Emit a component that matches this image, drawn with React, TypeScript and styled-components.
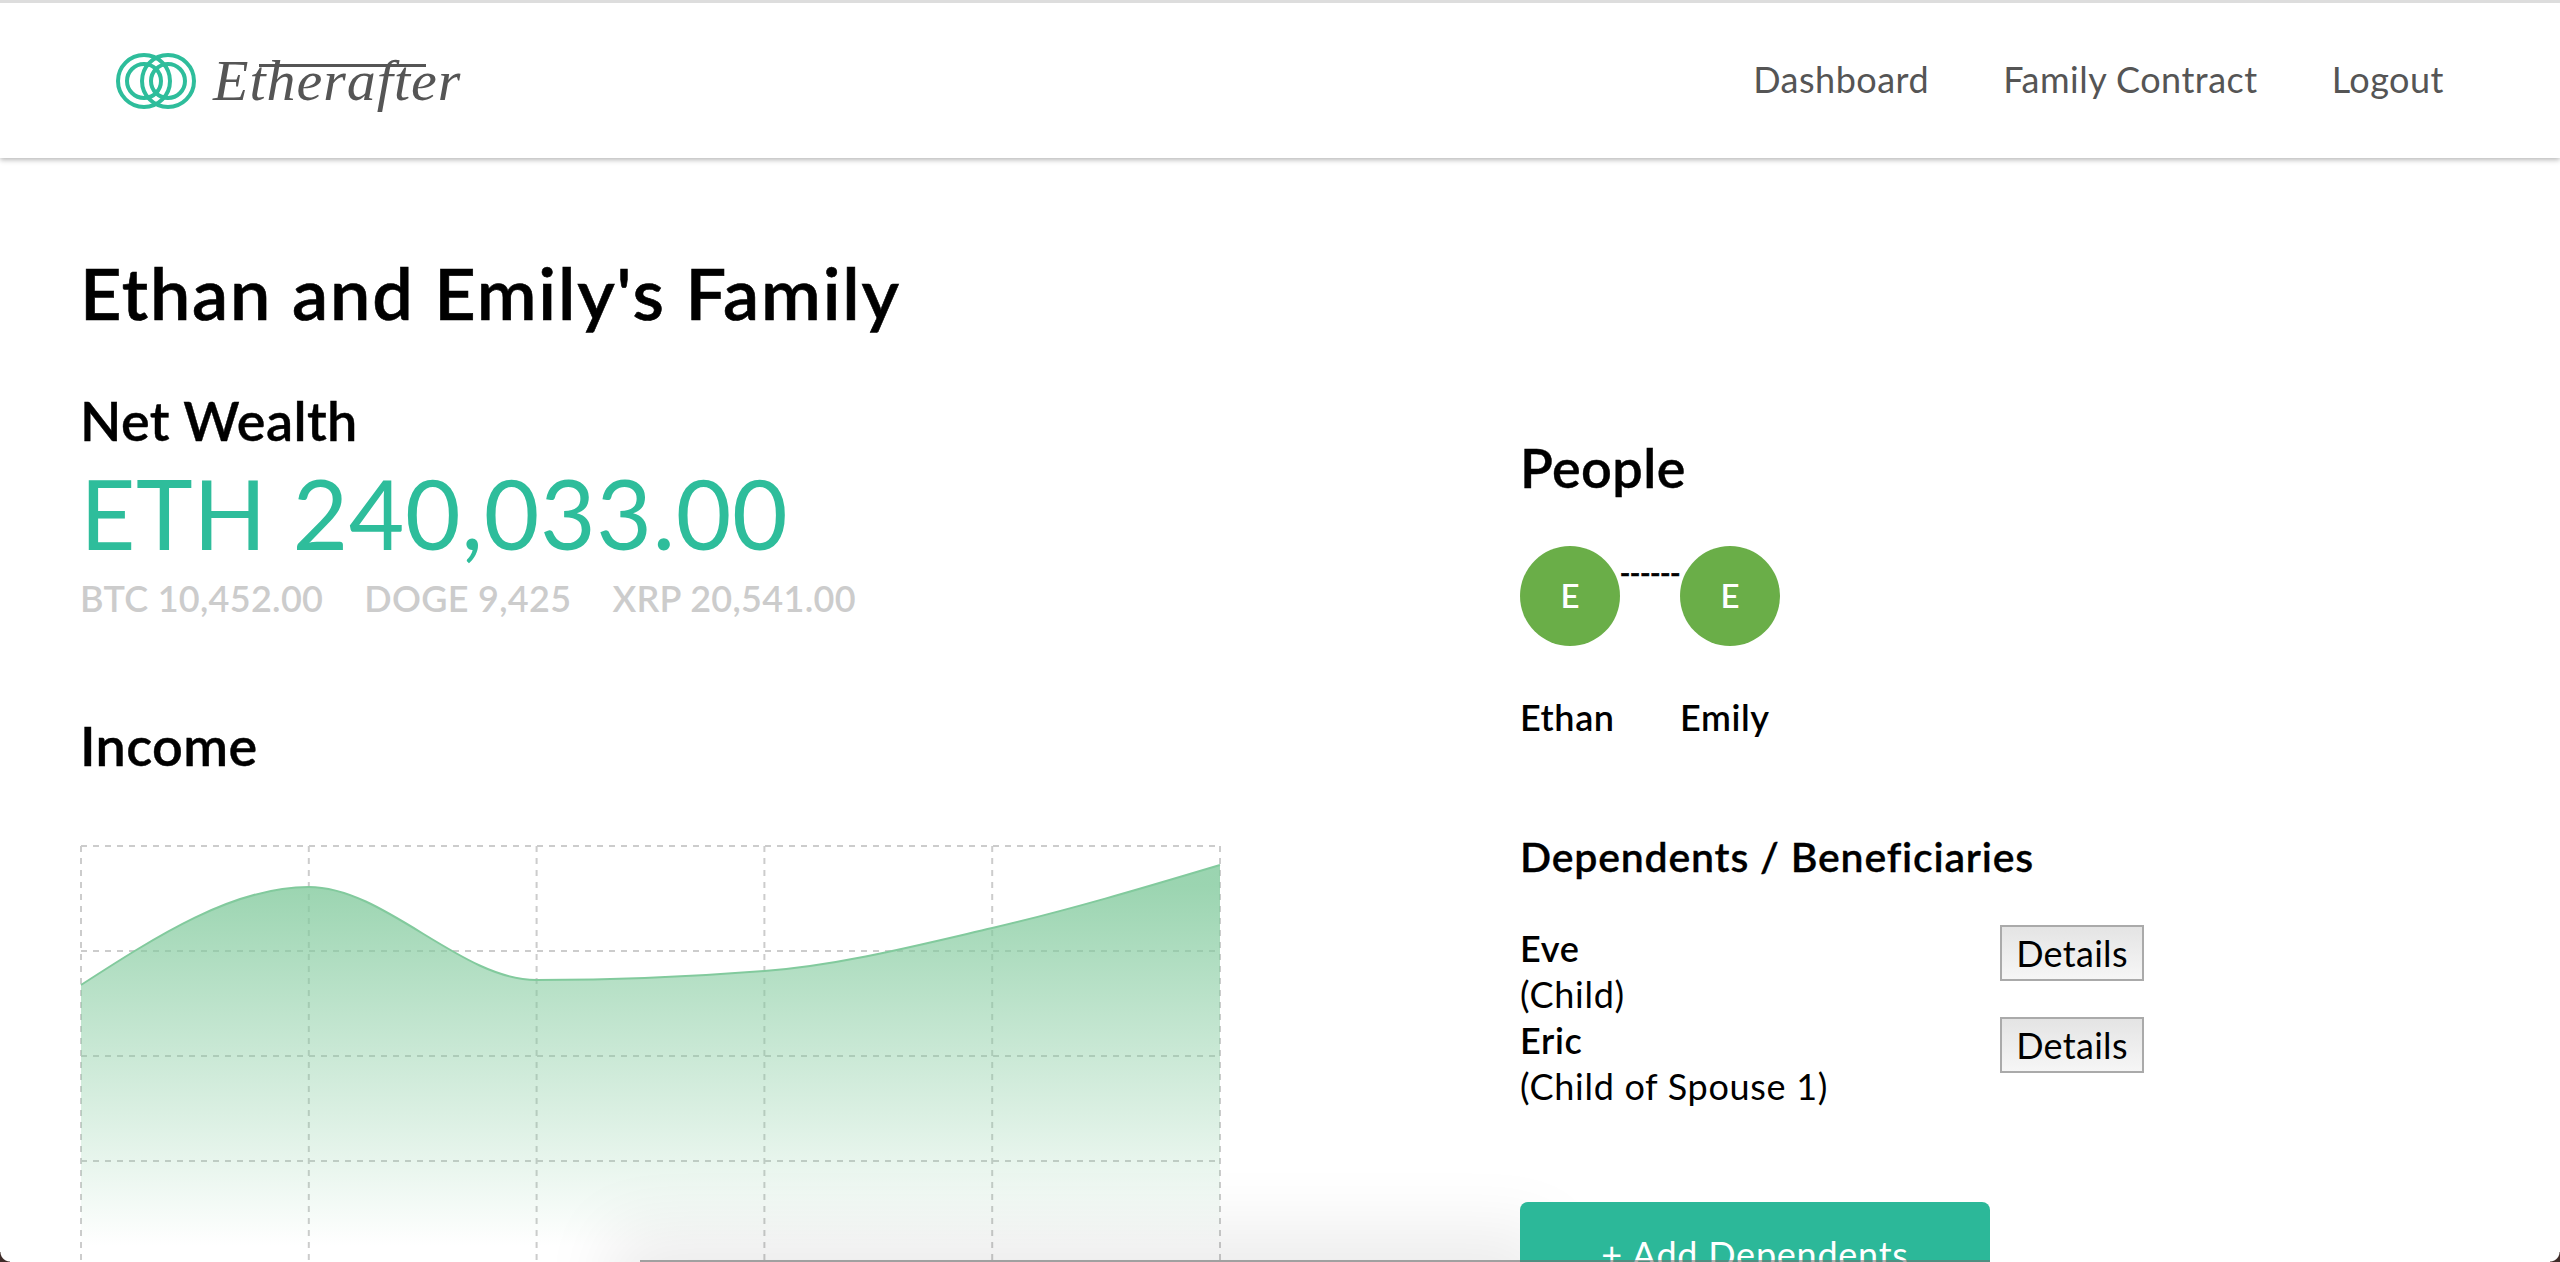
import React from "react";
import styled, { createGlobalStyle } from "styled-components";

const GlobalStyle = createGlobalStyle`
  html, body { margin: 0; padding: 0; height: 100%; overflow: hidden; background: #fff; }
  body { font-family: Lato, "Noto Sans", sans-serif; color: #000; }
  * { box-sizing: border-box; }
`;

const Page = styled.div`
  position: relative;
  height: 1262px;
  overflow: hidden;
`;

const Header = styled.header`
  position: relative;
  z-index: 2;
  height: 158px;
  border-top: 3px solid #ddd;
  padding: 0 116px;
  display: flex;
  align-items: center;
  justify-content: space-between;
  background: #fff;
  box-shadow: 0 2px 5px rgba(0, 0, 0, 0.28);
`;

const Brand = styled.a`
  display: flex;
  align-items: center;
  gap: 17px;
`;

const Wordmark = styled.span`
  position: relative;
  font-family: "Liberation Serif", serif;
  font-style: italic;
  font-size: 58px;
  line-height: 86px;
  color: #555;
  letter-spacing: 1px;
  &::after {
    content: "";
    position: absolute;
    left: 46px;
    top: 26px;
    width: 167px;
    height: 3px;
    background: #555;
  }
`;

const Nav = styled.nav`
  display: flex;
  gap: 74px;
  margin-top: -4px;
`;

const NavLink = styled.a`
  font-size: 36px;
  line-height: 44px;
  color: #555;
  letter-spacing: 0.5px;
`;

const Main = styled.main`
  display: grid;
  grid-template-columns: 1440px 1fr;
  padding-left: 80px;
`;

const LeftColumn = styled.section`
  padding-top: 94px;
`;

const RightColumn = styled.section`
  padding-top: 280px;
`;

const Title = styled.h1`
  margin: 0;
  font-size: 72px;
  line-height: 80px;
  font-weight: 600;
  letter-spacing: 1.8px;
  -webkit-text-stroke: 0.6px #000;
`;

const SectionTitle = styled.h2<{ $mt?: number }>`
  margin: ${(p) => p.$mt ?? 0}px 0 0;
  font-size: 54px;
  line-height: 60px;
  font-weight: 600;
  letter-spacing: 0.4px;
  -webkit-text-stroke: 0.4px #000;
`;

const Wealth = styled.div`
  margin-top: 8px;
  font-size: 96px;
  line-height: 108px;
  font-weight: 400;
  color: #2ebd9b;
  letter-spacing: 0.6px;
`;

const Holdings = styled.div`
  display: flex;
  gap: 41px;
  margin-top: 9px;
  font-size: 36px;
  line-height: 44px;
  font-weight: 600;
  letter-spacing: 0.3px;
  color: #ccc;
`;

const ChartBox = styled.div`
  margin-top: 69px;
  line-height: 0;
`;

const People = styled.div`
  display: flex;
  margin-top: 48px;
`;

const Person = styled.div`
  width: 100px;
`;

const Avatar = styled.div`
  width: 100px;
  height: 100px;
  padding-bottom: 2px;
  border-radius: 50%;
  background: #6aae48;
  color: #fff;
  font-size: 33px;
  font-weight: 600;
  display: flex;
  align-items: center;
  justify-content: center;
`;

const Name = styled.div`
  margin-top: 48px;
  font-size: 36px;
  line-height: 46px;
  font-weight: 600;
  letter-spacing: 0.6px;
  white-space: nowrap;
`;

const Dashes = styled.div`
  width: 60px;
  height: 40px;
  padding-top: 9px;
  font-size: 27px;
  line-height: 36px;
  font-weight: 700;
  text-align: center;
  white-space: nowrap;
  -webkit-text-stroke: 0.7px #000;
`;

const SubTitle = styled.h3`
  margin: 93px 0 0;
  font-size: 41px;
  line-height: 48px;
  font-weight: 600;
  letter-spacing: 0.8px;
  -webkit-text-stroke: 0.3px #000;
`;

const DependentList = styled.div`
  margin-top: 44px;
`;

const Dependent = styled.div`
  display: grid;
  grid-template-columns: 480px 144px;
`;

const DepText = styled.div`
  font-size: 36px;
  line-height: 46px;
  letter-spacing: 0.7px;
`;

const DepName = styled.div`
  font-weight: 600;
`;

const DetailsButton = styled.button`
  width: 144px;
  height: 56px;
  padding: 0;
  border: 2px solid #aaa;
  background: linear-gradient(#e4e4e4, #f6f6f6);
  font-family: inherit;
  font-size: 36px;
  letter-spacing: 0.3px;
  color: #000;
`;

const AddButton = styled.button`
  display: block;
  width: 470px;
  height: 100px;
  margin-top: 93px;
  padding: 4px 0 0;
  border: 0;
  border-radius: 8px;
  background: #2cb899;
  color: #fff;
  font-family: inherit;
  font-size: 36px;
  line-height: 44px;
  letter-spacing: 0.75px;
  position: relative;
  z-index: 1;
`;

const EdgeShadow = styled.div`
  position: absolute;
  left: 640px;
  top: 1260px;
  width: 880px;
  height: 60px;
  background: #ddd;
  box-shadow: 0 0 70px 30px rgba(0, 0, 0, 0.08);
  pointer-events: none;
`;

const EdgeLine = styled.div`
  position: absolute;
  z-index: 3;
  left: 640px;
  top: 1260px;
  width: 1350px;
  height: 2px;
  background: rgba(110, 110, 110, 0.55);
`;

const Corner = styled.span<{ $side: "left" | "right" }>`
  position: absolute;
  z-index: 4;
  bottom: 0;
  ${(p) => p.$side}: 0;
  width: 10px;
  height: 10px;
  background: radial-gradient(
    circle at ${(p) => (p.$side === "left" ? "100% 0" : "0 0")},
    transparent 9px,
    #3e2b28 10px
  );
`;

function RingsLogo() {
  return (
    <svg width="80" height="56" viewBox="0 0 80 56" fill="none" stroke="#2ebd9b" strokeWidth="4">
      <circle cx="28" cy="28" r="26" />
      <circle cx="28" cy="28" r="17" />
      <circle cx="52" cy="28" r="26" />
      <circle cx="52" cy="28" r="17" />
    </svg>
  );
}

const series = [139, 41, 134, 125, 82, 19];
const STEP = 227.8;

function monotonePath(ys: number[], step: number) {
  const slopes = ys.slice(1).map((y, i) => (y - ys[i]) / step);
  const t = ys.map((_, i) => {
    if (i === 0 || i === ys.length - 1) return 0;
    const a = slopes[i - 1];
    const b = slopes[i];
    if (a * b <= 0) return 0;
    const p = (a + b) / 2;
    return (Math.sign(a) + Math.sign(b)) * Math.min(Math.abs(a), Math.abs(b), 0.5 * Math.abs(p));
  });
  t[0] = (3 * slopes[0] - t[1]) / 2;
  t[ys.length - 1] = (3 * slopes[slopes.length - 1] - t[ys.length - 2]) / 2;
  let d = `M0,${ys[0]}`;
  for (let i = 0; i < ys.length - 1; i++) {
    const x0 = i * step;
    const x1 = (i + 1) * step;
    const dx = step / 3;
    d += `C${x0 + dx},${ys[i] + dx * t[i]} ${x1 - dx},${ys[i + 1] - dx * t[i + 1]} ${x1},${ys[i + 1]}`;
  }
  return d;
}

function IncomeChart() {
  const line = monotonePath(series, STEP);
  const width = STEP * 5;
  return (
    <svg width="1142" height="424" viewBox="-1 -1 1142 424" fill="none">
      <defs>
        <linearGradient id="income" x1="0" y1="0" x2="0" y2="1">
          <stop offset="5%" stopColor="#82ca9d" stopOpacity="0.8" />
          <stop offset="95%" stopColor="#82ca9d" stopOpacity="0" />
        </linearGradient>
      </defs>
      <g stroke="#ccc" strokeWidth="2" strokeDasharray="6 6">
        {[0, 105, 210, 315].map((y) => (
          <line key={y} x1="0" x2={width} y1={y} y2={y} />
        ))}
        {[0, 1, 2, 3, 4, 5].map((i) => (
          <line key={i} x1={i * STEP} x2={i * STEP} y1="0" y2="424" />
        ))}
      </g>
      <path d={`${line}L${width},420L0,420Z`} fill="url(#income)" />
      <path d={line} stroke="#82ca9d" strokeWidth="2" />
    </svg>
  );
}

export default function App() {
  return (
    <Page>
      <GlobalStyle />
      <EdgeShadow />
      <Header>
        <Brand>
          <RingsLogo />
          <Wordmark>Etherafter</Wordmark>
        </Brand>
        <Nav>
          <NavLink>Dashboard</NavLink>
          <NavLink>Family Contract</NavLink>
          <NavLink>Logout</NavLink>
        </Nav>
      </Header>
      <Main>
        <LeftColumn>
          <Title>Ethan and Emily's Family</Title>
          <SectionTitle $mt={59}>Net Wealth</SectionTitle>
          <Wealth>ETH 240,033.00</Wealth>
          <Holdings>
            <span>BTC 10,452.00</span>
            <span>DOGE 9,425</span>
            <span>XRP 20,541.00</span>
          </Holdings>
          <SectionTitle $mt={96}>Income</SectionTitle>
          <ChartBox>
            <IncomeChart />
          </ChartBox>
        </LeftColumn>
        <RightColumn>
          <SectionTitle>People</SectionTitle>
          <People>
            <Person>
              <Avatar>E</Avatar>
              <Name>Ethan</Name>
            </Person>
            <Dashes>------</Dashes>
            <Person>
              <Avatar>E</Avatar>
              <Name>Emily</Name>
            </Person>
          </People>
          <SubTitle>Dependents / Beneficiaries</SubTitle>
          <DependentList>
            <Dependent>
              <DepText>
                <DepName>Eve</DepName>
                (Child)
              </DepText>
              <DetailsButton>Details</DetailsButton>
            </Dependent>
            <Dependent>
              <DepText>
                <DepName>Eric</DepName>
                (Child of Spouse 1)
              </DepText>
              <DetailsButton>Details</DetailsButton>
            </Dependent>
          </DependentList>
          <AddButton>+ Add Dependents</AddButton>
        </RightColumn>
      </Main>
      <EdgeLine />
      <Corner $side="left" />
      <Corner $side="right" />
    </Page>
  );
}
